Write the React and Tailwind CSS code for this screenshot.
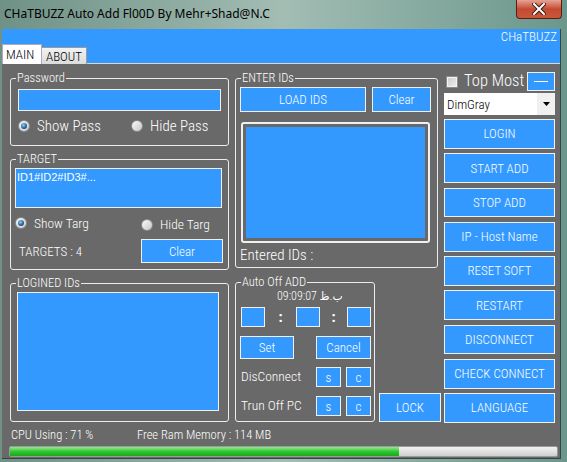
import React from 'react'

const Btn = ({ className = '', children }) => (
  <div className={`flex items-center justify-center whitespace-nowrap bg-[#3399ff] border border-[#f0f0f0] text-white text-[13px] leading-none ${className}`}>
    {children}
  </div>
)

const Group = ({ title, className = '', children }) => (
  <fieldset className={`min-w-0 border border-[#ececec] rounded-[3px] ${className}`}>
    <legend className="ml-[5px] px-[1px] text-[12.5px] leading-[14px] text-white">{title}</legend>
    {children}
  </fieldset>
)

const Radio = ({ on }) => (
  <span className="flex w-[12px] h-[12px] shrink-0 items-center justify-center rounded-full border border-[#8b8b8b] bg-linear-to-br from-[#fafafa] to-[#c9c9c9]">
    {on && <span className="w-[6px] h-[6px] rounded-full bg-[radial-gradient(circle_at_40%_35%,#8fd0f5,#1a5e9c_60%,#0c3a66)]" />}
  </span>
)

const BlueBox = ({ className = '', children }) => (
  <div className={`bg-[#3399ff] border border-[#f0f0f0] ${className}`}>{children}</div>
)

const sideButtons = ['LOGIN', 'START ADD', 'STOP ADD', 'IP - Host Name', 'RESET SOFT', 'RESTART', 'DISCONNECT', 'CHECK CONNECT', 'LANGUAGE']

export default function App() {
  return (
    <div className="w-[567px] h-[462px] overflow-hidden bg-linear-to-r from-[#6f9186] via-[#a3bdb3] to-[#6a978c] font-['Roboto','Liberation_Sans',Arial,sans-serif] font-stretch-[80%] font-[360] text-white">
      {/* title bar */}
      <div className="flex h-[29px] items-start justify-between">
        <div className="pl-[4px] pt-[6px] font-['Noto_Sans',sans-serif] font-stretch-normal font-normal text-[12px] leading-[16px] text-black">
          CHaTBUZZ Auto Add Fl00D By Mehr+Shad@N.C
        </div>
        <div className="mr-[5px] flex w-[46px] h-[19px] items-center justify-center rounded-b-[4px] border border-t-0 border-[#5b1d12] bg-linear-to-b from-[#e6a294] via-[#c44a32] to-[#c8583c]">
          <svg width="14" height="12" viewBox="0 0 14 12">
            <path d="M2 1 L12 11 M12 1 L2 11" stroke="#3a1a14" strokeWidth="4" strokeLinecap="square" />
            <path d="M2 1 L12 11 M12 1 L2 11" stroke="#ffffff" strokeWidth="2" strokeLinecap="square" />
          </svg>
        </div>
      </div>

      {/* client */}
      <div className="ml-[2px] w-[559px] border-r border-b border-[#33463f]">
        {/* header */}
        <div className="h-[34px] bg-[#3399ff]">
          <div className="flex justify-end pr-[3px] pt-[1px] text-[13px] leading-[14px]">CHaTBUZZ</div>
          <div className="flex items-end text-black text-[13px] leading-none">
            <div className="flex w-[40px] h-[20px] items-center pl-[3px] bg-white border border-b-0 border-[#aab]">MAIN</div>
            <div className="flex w-[45px] h-[17px] items-center justify-center bg-linear-to-b from-[#f2f2f2] to-[#dcdcdc] border border-l-0 border-b-0 border-[#9a9a9a]">ABOUT</div>
          </div>
        </div>

        {/* body */}
        <div className="h-[395px] bg-[#696969] border-t border-[#d8d8d8] pl-[8px] pt-[7px]">
          <div className="flex items-start">
            {/* left column */}
            <div className="flex w-[219px] flex-col">
              <Group title="Password" className="h-[75px]">
                <BlueBox className="ml-[7px] mt-[4px] w-[203px] h-[22px]" />
                <div className="mt-[7px] flex h-[16px] items-center text-[15px]">
                  <div className="ml-[7px] flex w-[113px] items-center gap-[7px]"><Radio on />Show Pass</div>
                  <div className="flex items-center gap-[7px]"><Radio />Hide Pass</div>
                </div>
              </Group>

              <Group title="TARGET" className="mt-[6px] h-[118px]">
                <BlueBox className="ml-[4px] mt-[2px] w-[207px] h-[40px] px-[1px] pt-[1px] font-['Liberation_Sans',Arial,sans-serif] font-stretch-normal font-normal text-[11px] leading-[14px]">
                  ID1#ID2#ID3#...
                </BlueBox>
                <div className="mt-[7px] flex h-[16px] items-center text-[13.5px]">
                  <div className="ml-[4px] flex w-[126px] items-center gap-[7px]"><Radio on />Show Targ</div>
                  <div className="mt-[3px] flex items-center gap-[7px]"><Radio />Hide Targ</div>
                </div>
                <div className="mt-[8px] flex items-center">
                  <div className="ml-[8px] w-[122px] text-[13px] leading-none">TARGETS : 4</div>
                  <Btn className="w-[82px] h-[24px]">Clear</Btn>
                </div>
              </Group>

              <Group title="LOGINED IDs" className="mt-[6px] h-[146px]">
                <BlueBox className="ml-[6px] mt-[2px] w-[202px] h-[119px]" />
              </Group>
            </div>

            {/* middle column */}
            <div className="ml-[6px] flex w-[206px] flex-col">
              <Group title="ENTER IDs" className="w-[203px] h-[197px]">
                <div className="mt-[2px] flex">
                  <Btn className="ml-[4px] w-[126px] h-[25px]">LOAD IDS</Btn>
                  <Btn className="ml-[6px] w-[59px] h-[25px]">Clear</Btn>
                </div>
                <div className="ml-[5px] mt-[10px] w-[189px] h-[121px] rounded-[3px] border-2 border-[#f0f0f0] p-[3px]">
                  <div className="h-full w-full bg-[#3399ff]" />
                </div>
                <div className="ml-[4px] mt-[4px] text-[15px] leading-[16px]">Entered IDs :</div>
              </Group>

              <div className="mt-[7px] flex items-end">
                <Group title="Auto Off ADD" className="w-[140px] h-[147px]">
                  <div className="pl-[41px] text-[12px] leading-[14px] font-['Roboto','DejaVu_Sans',sans-serif]">09:09:07 ب.ظ</div>
                  <div className="mt-[4px] flex items-center text-[15px] font-bold">
                    <BlueBox className="ml-[5px] w-[24px] h-[20px]" />
                    <div className="w-[31px] text-center leading-none">:</div>
                    <BlueBox className="w-[24px] h-[20px]" />
                    <div className="w-[27px] text-center leading-none">:</div>
                    <BlueBox className="w-[24px] h-[20px]" />
                  </div>
                  <div className="mt-[9px] flex">
                    <Btn className="ml-[4px] w-[54px] h-[23px]">Set</Btn>
                    <Btn className="ml-[22px] w-[55px] h-[23px]">Cancel</Btn>
                  </div>
                  <div className="mt-[8px] flex items-center">
                    <div className="ml-[5px] w-[75px] text-[13.5px] leading-none">DisConnect</div>
                    <Btn className="w-[25px] h-[20px]">s</Btn>
                    <Btn className="ml-[5px] w-[25px] h-[20px]">c</Btn>
                  </div>
                  <div className="mt-[9px] flex items-center">
                    <div className="ml-[5px] w-[75px] text-[13.5px] leading-none">Trun Off PC</div>
                    <Btn className="w-[25px] h-[20px]">s</Btn>
                    <Btn className="ml-[5px] w-[25px] h-[20px]">c</Btn>
                  </div>
                </Group>
                <Btn className="ml-[4px] w-[62px] h-[29px]">LOCK</Btn>
              </div>
            </div>

            {/* right column */}
            <div className="ml-[3px] flex w-[111px] flex-col">
              <div className="mt-[1px] flex h-[19px] items-center">
                <span className="ml-[2px] flex w-[12px] h-[12px] shrink-0 items-center justify-center border border-[#8b8b8b] bg-[#f4f4f4]">
                  <span className="w-[8px] h-[8px] bg-linear-to-br from-[#cfcfcf] to-[#ececec]" />
                </span>
                <span className="ml-[6px] whitespace-nowrap text-[16.5px] leading-none">Top Most</span>
                <Btn className="ml-auto w-[28px] h-[19px] shrink-0">
                  <span className="block w-[14px] h-[1px] bg-white" />
                </Btn>
              </div>
              <div className="mt-[2px] flex h-[22px] items-center bg-white text-black">
                <span className="flex-1 pl-[3px] text-[13px] leading-none">DimGray</span>
                <span className="flex w-[18px] h-full items-center justify-center bg-[#f0f0f0]">
                  <svg width="7" height="4" viewBox="0 0 7 4"><path d="M0 0 H7 L3.5 4 Z" fill="#000" /></svg>
                </span>
              </div>
              <div className="mt-[4px] flex flex-col gap-[4.5px]">
                {sideButtons.map((b) => (
                  <Btn key={b} className="w-[111px] h-[29.75px]">{b}</Btn>
                ))}
              </div>
            </div>
          </div>

          {/* status */}
          <div className="mt-[5px] flex h-[14px] items-center text-[12.5px] leading-none">
            <span className="ml-[1px] w-[126px]">CPU Using : 71 %</span>
            <span>Free Ram Memory : 114 MB</span>
          </div>
          <div className="ml-[-1px] mt-[4px] w-[549px] h-[11px] rounded-[2px] border border-[#9a9a9a] bg-linear-to-b from-[#f2f2f2] to-[#cfcfcf]">
            <div className="h-full w-[389px] bg-linear-to-b from-[#8ee88e] via-[#2fc72f] to-[#1aa81a]" />
          </div>
        </div>
      </div>
    </div>
  )
}
